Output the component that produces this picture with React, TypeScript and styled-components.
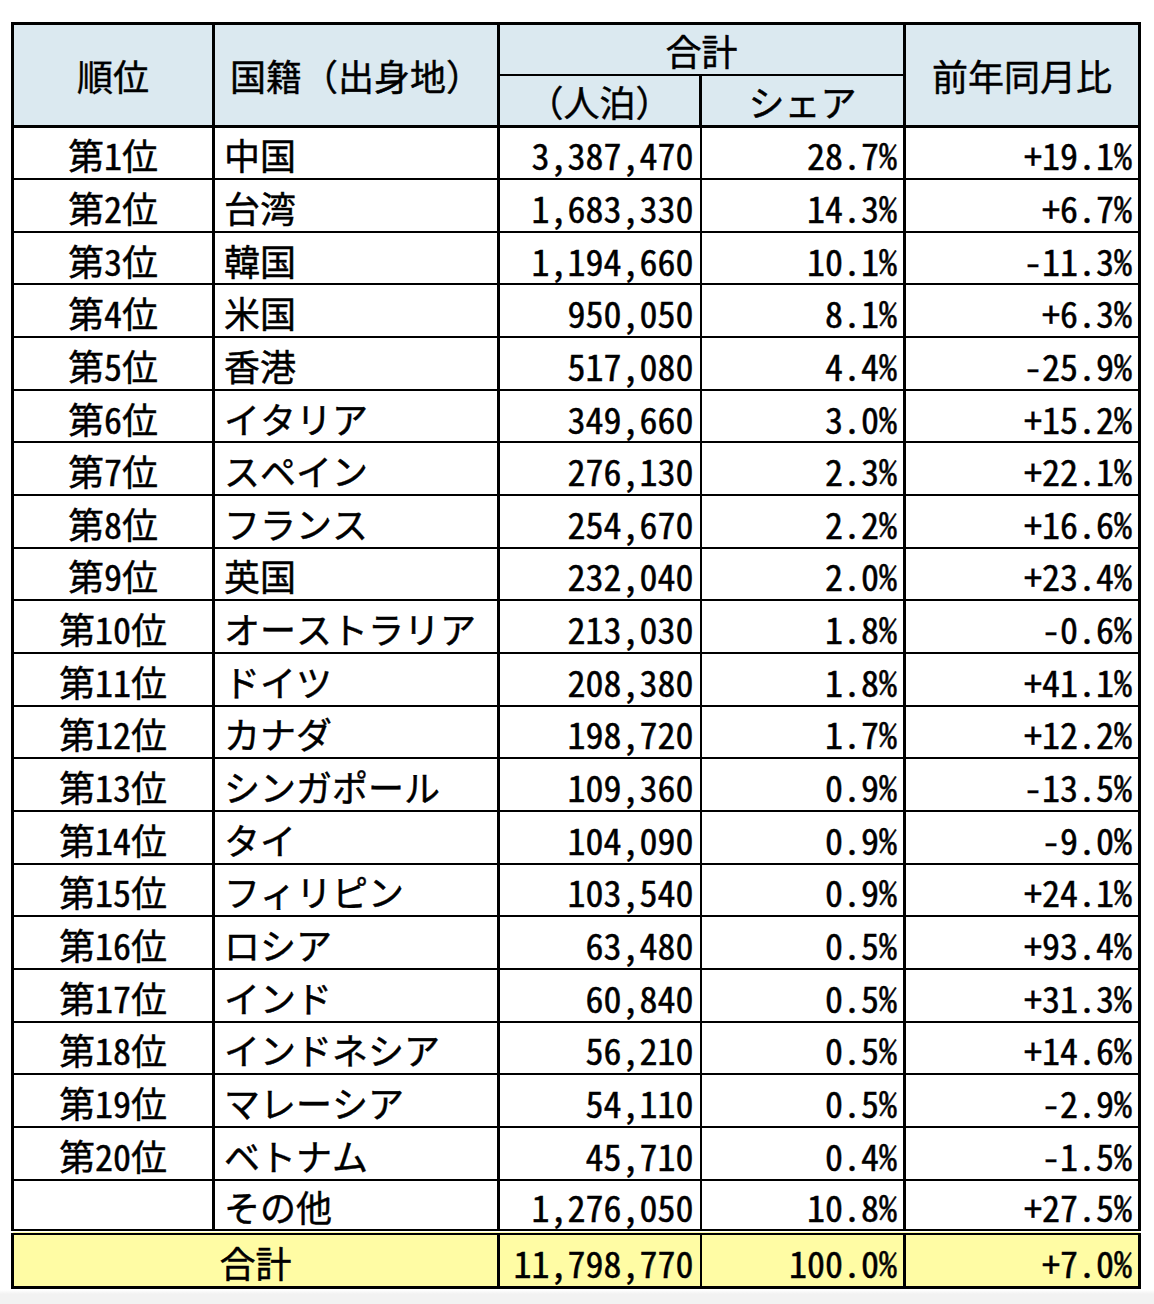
import React from "react";
import styled, { createGlobalStyle } from "styled-components";

const GlobalStyle = createGlobalStyle`
  html, body {
    margin: 0;
    padding: 0;
    background: #ffffff;
  }
  body {
    font-family: "Noto Sans Mono CJK JP", "Noto Sans CJK JP", monospace;
    color: #000;
  }
`;

const Page = styled.div`
  width: 1154px;
  min-height: 1304px;
  box-sizing: border-box;
  padding: 22px 0 0 11px;
  background: linear-gradient(#ffffff 0, #ffffff 1290px, #f2f2f2 1294px, #f2f2f2 100%);
`;

const Table = styled.table`
  border-collapse: collapse;
  table-layout: fixed;
  width: 1127px;
  border: 3px solid #000;
  font-size: 36px;
  line-height: 1.2;
  background: #fff;
  -webkit-text-stroke: 0.45px #000;
`;

const HeadCell = styled.th<{ $bottom?: number; $right?: number }>`
  background: #dbe9f0;
  font-weight: 400;
  text-align: center;
  vertical-align: middle;
  padding: 2px 0 0 0;
  border-left: 3px solid #000;
  border-right: ${(p) => p.$right ?? 3}px solid #000;
  border-bottom: ${(p) => p.$bottom ?? 3}px solid #000;
  white-space: nowrap;
`;

const HeadRow = styled.tr`
  height: 51.5px;
`;

const BodyRow = styled.tr<{ $total?: boolean }>`
  height: ${(p) => (p.$total ? "55px" : "52.67px")};
  background: ${(p) => (p.$total ? "#fffca4" : "#fff")};
  ${(p) => (p.$total ? "border-top: 6px double #000;" : "")}
`;

const Cell = styled.td<{ $align: "left" | "right" | "center"; $thin?: boolean }>`
  text-align: ${(p) => p.$align};
  vertical-align: middle;
  padding: 4px ${(p) => (p.$align === "right" ? "6px" : "0")} 0
    ${(p) => (p.$align === "left" ? "9px" : "0")};
  border-bottom: 2px solid #000;
  border-left: ${(p) => (p.$thin ? 2 : 3)}px solid #000;
  white-space: nowrap;
`;

type Row = [string, string, string, string, string];

const rows: Row[] = [
  ["第1位", "中国", "3,387,470", "28.7%", "+19.1%"],
  ["第2位", "台湾", "1,683,330", "14.3%", "+6.7%"],
  ["第3位", "韓国", "1,194,660", "10.1%", "-11.3%"],
  ["第4位", "米国", "950,050", "8.1%", "+6.3%"],
  ["第5位", "香港", "517,080", "4.4%", "-25.9%"],
  ["第6位", "イタリア", "349,660", "3.0%", "+15.2%"],
  ["第7位", "スペイン", "276,130", "2.3%", "+22.1%"],
  ["第8位", "フランス", "254,670", "2.2%", "+16.6%"],
  ["第9位", "英国", "232,040", "2.0%", "+23.4%"],
  ["第10位", "オーストラリア", "213,030", "1.8%", "-0.6%"],
  ["第11位", "ドイツ", "208,380", "1.8%", "+41.1%"],
  ["第12位", "カナダ", "198,720", "1.7%", "+12.2%"],
  ["第13位", "シンガポール", "109,360", "0.9%", "-13.5%"],
  ["第14位", "タイ", "104,090", "0.9%", "-9.0%"],
  ["第15位", "フィリピン", "103,540", "0.9%", "+24.1%"],
  ["第16位", "ロシア", "63,480", "0.5%", "+93.4%"],
  ["第17位", "インド", "60,840", "0.5%", "+31.3%"],
  ["第18位", "インドネシア", "56,210", "0.5%", "+14.6%"],
  ["第19位", "マレーシア", "54,110", "0.5%", "-2.9%"],
  ["第20位", "ベトナム", "45,710", "0.4%", "-1.5%"],
  ["", "その他", "1,276,050", "10.8%", "+27.5%"],
];

export default function App() {
  return (
    <>
      <GlobalStyle />
      <Page>
        <Table>
          <colgroup>
            <col style={{ width: 201 }} />
            <col style={{ width: 285 }} />
            <col style={{ width: 202 }} />
            <col style={{ width: 204 }} />
            <col style={{ width: 235 }} />
          </colgroup>
          <thead>
            <HeadRow>
              <HeadCell rowSpan={2}>順位</HeadCell>
              <HeadCell rowSpan={2}>国籍（出身地）</HeadCell>
              <HeadCell colSpan={2} $bottom={2}>
                合計
              </HeadCell>
              <HeadCell rowSpan={2}>前年同月比</HeadCell>
            </HeadRow>
            <HeadRow>
              <HeadCell $right={2}>（人泊）</HeadCell>
              <HeadCell>シェア</HeadCell>
            </HeadRow>
          </thead>
          <tbody>
            {rows.map((r, i) => (
              <BodyRow key={i}>
                <Cell $align="center">{r[0]}</Cell>
                <Cell $align="left">{r[1]}</Cell>
                <Cell $align="right">{r[2]}</Cell>
                <Cell $align="right" $thin>
                  {r[3]}
                </Cell>
                <Cell $align="right">{r[4]}</Cell>
              </BodyRow>
            ))}
            <BodyRow $total>
              <Cell $align="center" colSpan={2}>
                合計
              </Cell>
              <Cell $align="right">11,798,770</Cell>
              <Cell $align="right" $thin>
                100.0%
              </Cell>
              <Cell $align="right">+7.0%</Cell>
            </BodyRow>
          </tbody>
        </Table>
      </Page>
    </>
  );
}
